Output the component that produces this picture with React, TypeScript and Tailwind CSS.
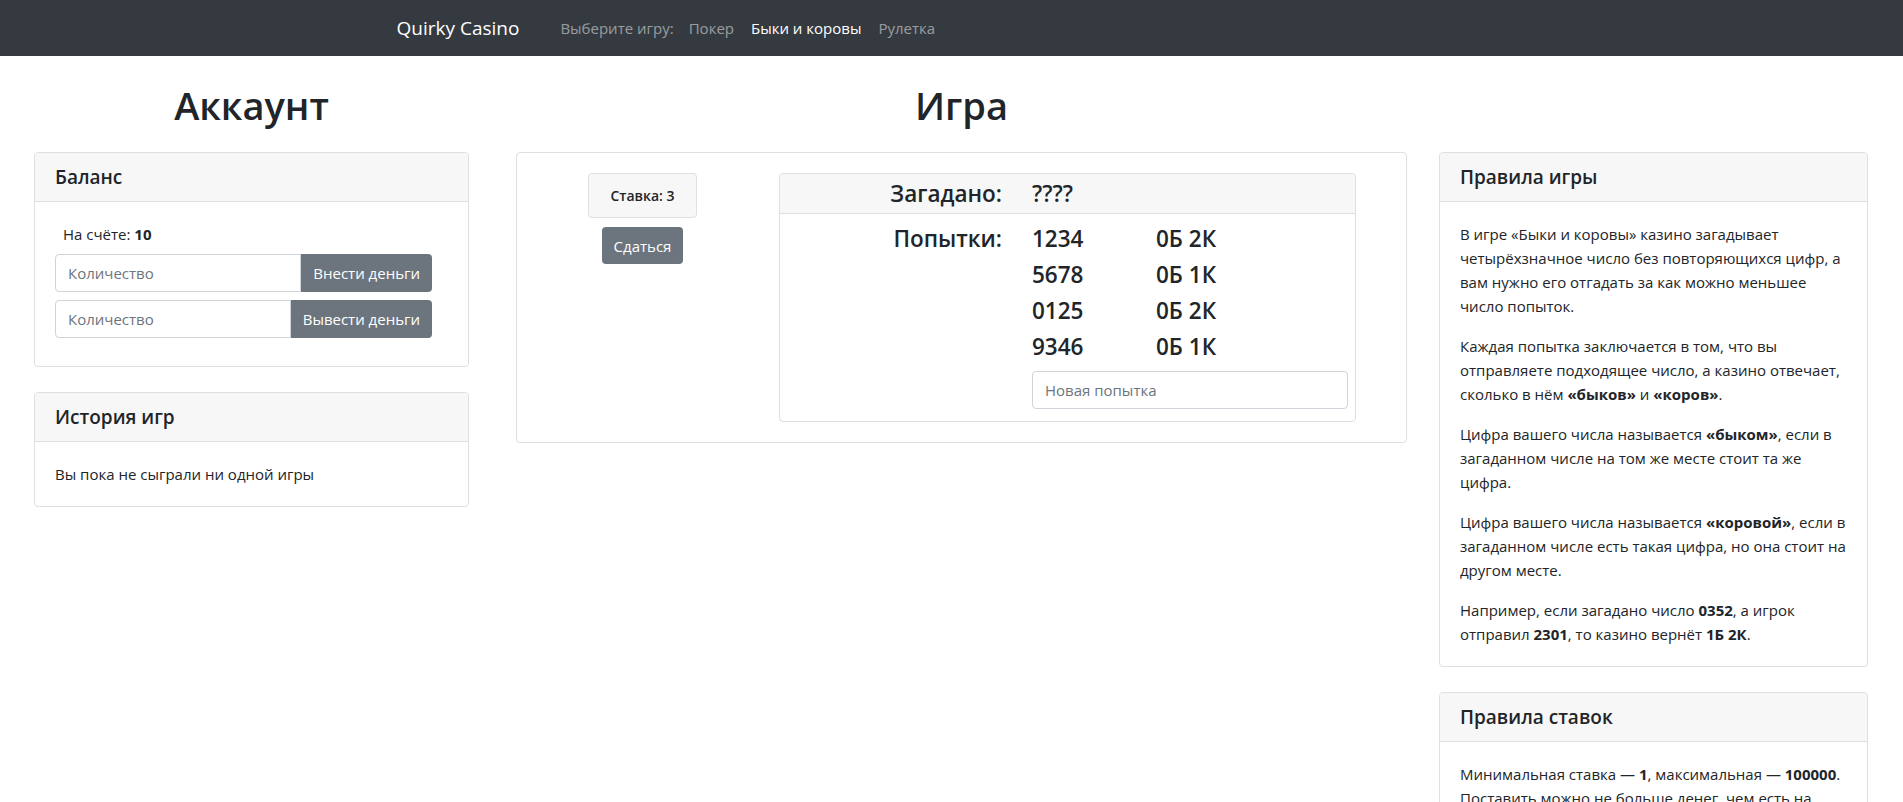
import React from 'react';

interface Attempt {
  guess: string;
  result: string;
}

const attempts: Attempt[] = [
  { guess: '1234', result: '0Б 2К' },
  { guess: '5678', result: '0Б 1К' },
  { guess: '0125', result: '0Б 2К' },
  { guess: '9346', result: '0Б 1К' },
];

function Card({ title, children, className = '' }: { title: string; children: React.ReactNode; className?: string }) {
  return (
    <div className={`border border-[#dfdfdf] rounded-[4px] bg-white ${className}`}>
      <div className="bg-[#f7f7f7] border-b border-[#dfdfdf] rounded-t-[4px] px-5 py-3 text-[19px] leading-6 font-semibold">
        {title}
      </div>
      <div className="p-5">{children}</div>
    </div>
  );
}

function MoneyForm({ label }: { label: string }) {
  return (
    <div className="flex w-[377px] h-[38px] mb-2">
      <input
        type="text"
        placeholder="Количество"
        className="flex-1 min-w-0 border border-[#ced4da] rounded-l-[4px] px-3 text-[15px] placeholder:text-[#6c757d] outline-none"
      />
      <button className="bg-[#6c757d] text-white px-3 rounded-r-[4px] text-[15px] whitespace-nowrap">{label}</button>
    </div>
  );
}

export default function App() {
  return (
    <div className="min-h-screen bg-white text-[#212529] font-['Open_Sans',sans-serif] text-[15px] leading-6">
      {/* Navbar */}
      <nav className="h-14 bg-[#343a40] flex items-center">
        <div className="w-[1140px] mx-auto px-[15px] flex items-center">
          <span className="text-[19px] text-white mr-[41px]">Quirky Casino</span>
          <span className="text-white/50 mr-[15px]">Выберите игру:</span>
          <a className="text-white/50 mr-[17px]">Покер</a>
          <a className="text-white mr-[17px]">Быки и коровы</a>
          <a className="text-white/50">Рулетка</a>
        </div>
      </nav>

      <div className="flex items-start px-[34px]">
        {/* Account column */}
        <div className="w-[435px] shrink-0">
          <h1 className="pt-[25px] mb-[23px] text-[38px] leading-[48px] font-semibold text-center h-[73px]">Аккаунт</h1>
          <Card title="Баланс" className="mb-[25px]">
            <div className="pl-2 mb-2">
              На счёте: <b className="font-bold">10</b>
            </div>
            <MoneyForm label="Внести деньги" />
            <MoneyForm label="Вывести деньги" />
          </Card>
          <Card title="История игр">
            <p>Вы пока не сыграли ни одной игры</p>
          </Card>
        </div>

        {/* Game column */}
        <div className="w-[891px] shrink-0 ml-[47px]">
          <h1 className="pt-[25px] mb-[23px] text-[38px] leading-[48px] font-semibold text-center h-[73px]">Игра</h1>
          <div className="border border-[#dfdfdf] rounded-[4px] p-5 flex items-start">
            <div className="w-[211px] flex flex-col items-center">
              <div className="w-[109px] h-[45px] bg-[#f7f7f7] border border-[#dfdfdf] rounded-[4px] flex items-center justify-center text-[14px] font-semibold">
                Ставка: 3
              </div>
              <button className="mt-[9px] h-[37px] px-3 bg-[#6c757d] text-white rounded-[4px] text-[15px]">Сдаться</button>
            </div>

            <div className="w-[577px] ml-[31px] border border-[#dfdfdf] rounded-[4px] text-[22.5px] font-semibold">
              <div className="h-10 bg-[#f7f7f7] border-b border-[#dfdfdf] rounded-t-[4px] flex items-center">
                <div className="w-[222px] text-right">Загадано:</div>
                <div className="ml-[30px]">????</div>
              </div>
              <div className="flex pt-[7px] pb-[12px]">
                <div className="w-[222px] text-right leading-9">Попытки:</div>
                <div className="ml-[30px]">
                  {attempts.map((a) => (
                    <div key={a.guess} className="flex leading-9">
                      <div className="w-[124px]">{a.guess}</div>
                      <div>{a.result}</div>
                    </div>
                  ))}
                  <input
                    type="text"
                    placeholder="Новая попытка"
                    className="mt-[6px] w-[316px] h-[38px] border border-[#ced4da] rounded-[4px] px-3 text-[15px] font-normal placeholder:text-[#6c757d] outline-none"
                  />
                </div>
              </div>
            </div>
          </div>
        </div>

        {/* Rules column */}
        <div className="w-[429px] shrink-0 ml-[32px] pt-[96px]">
          <Card title="Правила игры" className="mb-[25px]">
            <p className="mb-4">
              В игре «Быки и коровы» казино загадывает четырёхзначное число без повторяющихся цифр, а вам нужно его
              отгадать за как можно меньшее число попыток.
            </p>
            <p className="mb-4">
              Каждая попытка заключается в том, что вы отправляете подходящее число, а казино отвечает, сколько в нём{' '}
              <b>«быков»</b> и <b>«коров»</b>.
            </p>
            <p className="mb-4">
              Цифра вашего числа называется <b>«быком»</b>, если в загаданном числе на том же месте стоит та же цифра.
            </p>
            <p className="mb-4">
              Цифра вашего числа называется <b>«коровой»</b>, если в загаданном числе есть такая цифра, но она стоит на
              другом месте.
            </p>
            <p>
              Например, если загадано число <b>0352</b>, а игрок отправил <b>2301</b>, то казино вернёт <b>1Б 2К</b>.
            </p>
          </Card>
          <Card title="Правила ставок" className="mb-6">
            <p className="mb-4">
              Минимальная ставка — <b>1</b>, максимальная — <b>100000</b>. Поставить можно не больше денег, чем есть на
              счёте.
            </p>
            <p>Если вы отгадали число, ваш выигрыш зависит от количества попыток.</p>
          </Card>
        </div>
      </div>
    </div>
  );
}
